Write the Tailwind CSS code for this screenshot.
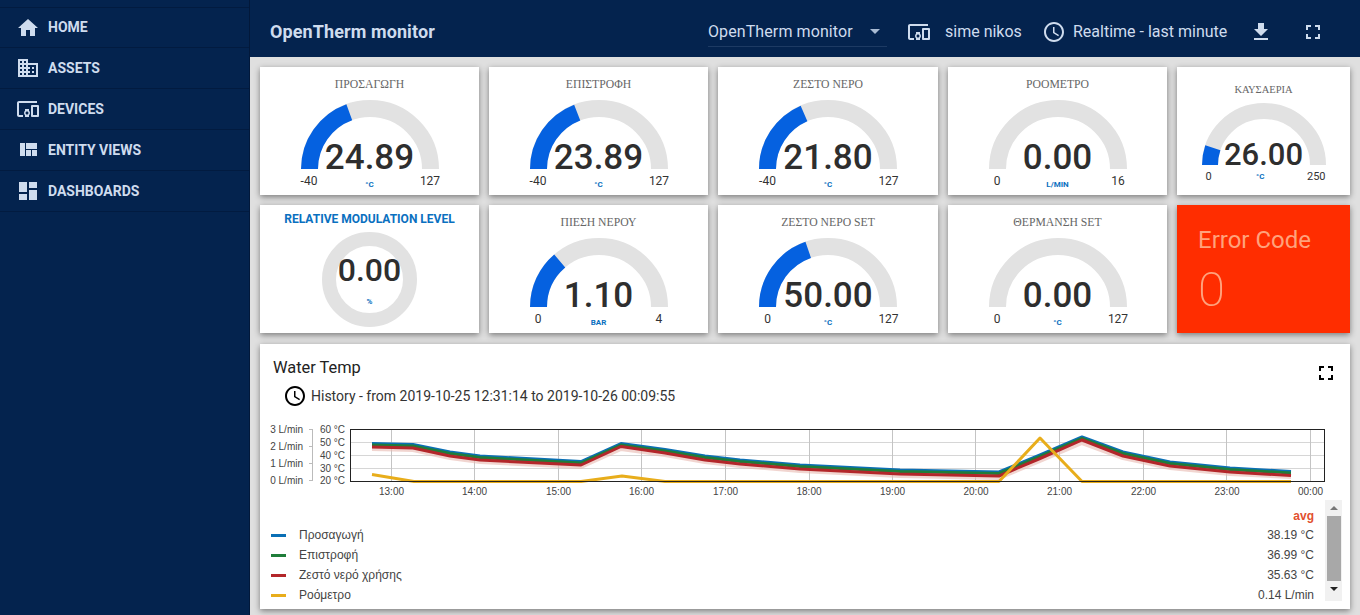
<!DOCTYPE html>
<html lang="el">
<head>
<meta charset="UTF-8" />
<meta name="viewport" content="width=device-width, initial-scale=1.0"/>
<title>OpenTherm monitor</title>
<script src="https://cdn.jsdelivr.net/npm/@tailwindcss/browser@4"></script>
</head>
<body class="h-[615px] w-[1360px] overflow-hidden bg-[#dfdfdf] font-['Roboto',sans-serif] flex">

<!-- SIDEBAR -->
<aside class="w-[250px] h-full bg-[#04234e] border-r border-[#02183a] pt-[7px] shrink-0 text-[#cfdcee] text-[14px] font-bold">
  <div class="h-[41px] border-y border-[#021b40] flex items-center pl-4 gap-2">
    <svg class="w-6 h-6 fill-current" viewBox="0 0 24 24"><path d="M10 20v-6h4v6h5v-8h3L12 3 2 12h3v8z"/></svg>HOME
  </div>
  <div class="h-[41px] border-b border-[#021b40] flex items-center pl-4 gap-2">
    <svg class="w-6 h-6 fill-current" viewBox="0 0 24 24"><path d="M12 7V3H2v18h20V7H12zM6 19H4v-2h2v2zm0-4H4v-2h2v2zm0-4H4V9h2v2zm0-4H4V5h2v2zm4 12H8v-2h2v2zm0-4H8v-2h2v2zm0-4H8V9h2v2zm0-4H8V5h2v2zm10 12h-8v-2h2v-2h-2v-2h2v-2h-2V9h8v10zm-2-8h-2v2h2v-2zm0 4h-2v2h2v-2z"/></svg>ASSETS
  </div>
  <div class="h-[41px] border-b border-[#021b40] flex items-center pl-4 gap-2">
    <svg class="w-6 h-6 fill-current" viewBox="0 0 24 24"><path d="M3 6h18V4H3c-1.1 0-2 .9-2 2v12c0 1.1.9 2 2 2h4v-2H3V6zm10 6H9v1.78c-.61.55-1 1.33-1 2.22s.39 1.67 1 2.22V20h4v-1.78c.61-.55 1-1.34 1-2.22s-.39-1.67-1-2.22V12zm-2 5.5c-.83 0-1.5-.67-1.5-1.5s.67-1.5 1.5-1.5 1.5.67 1.5 1.5-.67 1.5-1.5 1.5zM22 8h-6c-.5 0-1 .5-1 1v10c0 .5.5 1 1 1h6c.5 0 1-.5 1-1V9c0-.5-.5-1-1-1zm-1 10h-4v-8h4v8z"/></svg>DEVICES
  </div>
  <div class="h-[41px] border-b border-[#021b40] flex items-center pl-4 gap-2">
    <svg class="w-6 h-6 fill-current" viewBox="0 0 24 24"><path d="M10 18h5v-6h-5v6zm-6 0h5V5H4v13zm12 0h5v-6h-5v6zM10 5v6h11V5H10z"/></svg>ENTITY VIEWS
  </div>
  <div class="h-[41px] border-b border-[#021b40] flex items-center pl-4 gap-2">
    <svg class="w-6 h-6 fill-current" viewBox="0 0 24 24"><path d="M3 13h8V3H3v10zm0 8h8v-6H3v6zm10 0h8V11h-8v10zm0-18v6h8V3h-8z"/></svg>DASHBOARDS
  </div>
</aside>

<div class="flex-1 flex flex-col min-w-0">
  <!-- TOOLBAR -->
  <header class="h-[57px] pt-[6px] bg-[#04234e] flex items-center text-[#cfdcee] text-[16px] shrink-0">
    <span class="ml-[20px] w-[438px] text-[18px] font-bold tracking-[0.1px]">OpenTherm monitor</span>
    <div class="w-[179px] h-[30px] mt-[1px] border-b border-[#1d3a63] flex items-center justify-between pr-[7px] whitespace-nowrap tracking-[0.1px]">
      OpenTherm monitor
      <span class="w-0 h-0 border-x-[5px] border-x-transparent border-t-[5px] border-t-[#a9bbd3]"></span>
    </div>
    <svg class="ml-[20px] w-6 h-6 fill-current" viewBox="0 0 24 24"><path d="M3 6h18V4H3c-1.1 0-2 .9-2 2v12c0 1.1.9 2 2 2h4v-2H3V6zm10 6H9v1.78c-.61.55-1 1.33-1 2.22s.39 1.67 1 2.22V20h4v-1.78c.61-.55 1-1.34 1-2.22s-.39-1.67-1-2.22V12zm-2 5.5c-.83 0-1.5-.67-1.5-1.5s.67-1.5 1.5-1.5 1.5.67 1.5 1.5-.67 1.5-1.5 1.5zM22 8h-6c-.5 0-1 .5-1 1v10c0 .5.5 1 1 1h6c.5 0 1-.5 1-1V9c0-.5-.5-1-1-1zm-1 10h-4v-8h4v8z"/></svg>
    <span class="ml-[14px] w-[97px] whitespace-nowrap">sime nikos</span>
    <svg class="w-6 h-6 fill-current" viewBox="0 0 24 24"><path d="M11.99 2C6.47 2 2 6.48 2 12s4.47 10 9.99 10C17.52 22 22 17.52 22 12S17.52 2 11.99 2zM12 20c-4.42 0-8-3.58-8-8s3.58-8 8-8 8 3.58 8 8-3.58 8-8 8zm.5-13H11v6l5.25 3.15.75-1.23-4.5-2.67z"/></svg>
    <span class="ml-[7px] w-[176px] whitespace-nowrap">Realtime - last minute</span>
    <svg class="w-6 h-6 fill-current" viewBox="0 0 24 24"><path d="M19 9h-4V3H9v6H5l7 7 7-7zM5 18v2h14v-2H5z"/></svg>
    <svg class="ml-[28px] w-6 h-6 fill-current" viewBox="0 0 24 24"><path d="M7 14H5v5h5v-2H7v-3zm-2-4h2V7h3V5H5v5zm12 7h-3v2h5v-5h-2v3zM14 5v2h3v3h2V5h-5z"/></svg>
  </header>

  <main class="flex-1 pl-[10px] pt-[10px]">
    <!-- GAUGES -->
    <div id="widgets" class="grid grid-cols-[219px_219px_220px_219px_173px] grid-rows-[128px_128px] gap-x-[10px] gap-y-[10px]"></div>

    <!-- CHART CARD -->
    <section class="mt-[11px] w-[1090px] h-[265px] bg-white shadow-[0_2px_6px_rgba(0,0,0,0.45)] flex flex-col">
      <div class="h-[38px] pl-[13px] pr-[12px] flex items-end justify-between text-[16.4px] text-[#222]">
        <span class="leading-[24px] mb-[2px]">Water Temp</span>
        <svg class="w-6 h-6 mb-[-3px] fill-black" viewBox="0 0 24 24"><path d="M7 14H5v5h5v-2H7v-3zm-2-4h2V7h3V5H5v5zm12 7h-3v2h5v-5h-2v3zM14 5v2h3v3h2V5h-5z"/></svg>
      </div>
      <div class="h-[28px] pl-[23px] flex items-center gap-[4px] text-[14px] text-[#333]">
        <svg class="w-6 h-6 fill-black" viewBox="0 0 24 24"><path d="M11.99 2C6.47 2 2 6.48 2 12s4.47 10 9.99 10C17.52 22 22 17.52 22 12S17.52 2 11.99 2zM12 20c-4.42 0-8-3.58-8-8s3.58-8 8-8 8 3.58 8 8-3.58 8-8 8zm.5-13H11v6l5.25 3.15.75-1.23-4.5-2.67z"/></svg>
        History - from 2019-10-25 12:31:14 to 2019-10-26 00:09:55
      </div>
      <svg class="mt-[10px] w-[1090px] h-[80px] shrink-0 font-['Liberation_Sans',sans-serif] text-[10px] fill-[#444]" viewBox="260 420 1090 80">
        <g stroke="#d6d6d6" stroke-width="1">
          <path d="M351 442.5H1324M351 455.5H1324M351 468.5H1324"/>
          <path d="M391.5 430V481M474.5 430V481M558.5 430V481M641.5 430V481M725.5 430V481M809.5 430V481M892.5 430V481M975.5 430V481M1059.5 430V481M1143.5 430V481M1226.5 430V481M1310.5 430V481" stroke="#c4c4c4"/>
        </g>
        <!-- series -->
        <g fill="none" stroke-width="3" stroke-linejoin="round">
          <polyline stroke="#e8b9b0" stroke-width="4" opacity="0.6" points="372,449 413,450 450,458 480,462 581,467 621,449 665,455 705,462 740,466 800,471 900,476 999,478 1040,461 1082,443 1123,458 1170,468 1230,474 1291,477"/>
          <polyline stroke="#0a6fb5" points="372,443.5 413,444.5 450,452 480,456 581,461.5 621,443.5 665,449.5 705,456 740,460 800,465 900,470 999,472 1040,455 1082,437 1123,452 1170,462 1230,468 1291,471.5"/>
          <polyline stroke="#1f7d3a" points="372,445 413,446 450,453.5 480,457.5 581,463 621,445 665,451 705,457.5 740,461.5 800,466.5 900,471.5 999,473.5 1040,456.5 1082,438.5 1123,453.5 1170,463.5 1230,469.5 1291,473"/>
          <polyline stroke="#b3262a" points="372,447 413,448 450,456 480,460 581,465 621,446.5 665,453 705,460 740,464 800,469 900,474 999,476 1040,458.5 1082,440 1123,456 1170,466 1230,472 1291,475.5"/>
          <polyline stroke="#e8ad1b" points="372,474.5 414,481.5 581,481.5 622,476 665,481.5 999,481.5 1040,438 1082,481.5 1291,481.5"/>
        </g>
        <rect x="350.5" y="429.5" width="974" height="52" fill="none" stroke="#222" stroke-width="1"/>
        <path d="M312.5 430V481M309 429.5H313M309 446.5H313M309 463.5H313M309 480.5H313" stroke="#bbb" fill="none"/>
        <g text-anchor="end">
          <text x="303" y="433">3 L/min</text><text x="303" y="450">2 L/min</text><text x="303" y="467">1 L/min</text><text x="303" y="484">0 L/min</text>
          <text x="345" y="433">60 °C</text><text x="345" y="446">50 °C</text><text x="345" y="459">40 °C</text><text x="345" y="472">30 °C</text><text x="345" y="484">20 °C</text>
        </g>
        <g text-anchor="middle">
          <text x="391.5" y="495">13:00</text><text x="474.5" y="495">14:00</text><text x="558.5" y="495">15:00</text><text x="641.5" y="495">16:00</text><text x="725.5" y="495">17:00</text><text x="809" y="495">18:00</text><text x="892.5" y="495">19:00</text><text x="976" y="495">20:00</text><text x="1059.5" y="495">21:00</text><text x="1143.5" y="495">22:00</text><text x="1227" y="495">23:00</text><text x="1310.5" y="495">00:00</text>
        </g>
      </svg>
      <!-- LEGEND -->
      <div class="relative pl-[11px] pr-[36px] pt-[6px] font-['Liberation_Sans',sans-serif] text-[12px] text-[#444]">
        <div class="h-[19px] text-right font-bold text-[#e2502f] leading-[20px]">avg</div>
        <div class="h-[20px] flex items-center"><span class="w-[15px] h-[3px] bg-[#0a6fb5] mr-[13px]"></span>Προσαγωγή<span class="ml-auto">38.19 °C</span></div>
        <div class="h-[20px] flex items-center"><span class="w-[15px] h-[3px] bg-[#1f7d3a] mr-[13px]"></span>Επιστροφή<span class="ml-auto">36.99 °C</span></div>
        <div class="h-[20px] flex items-center"><span class="w-[15px] h-[3px] bg-[#b3262a] mr-[13px]"></span>Ζεστό νερό χρήσης<span class="ml-auto">35.63 °C</span></div>
        <div class="h-[20px] flex items-center"><span class="w-[15px] h-[3px] bg-[#e8ad1b] mr-[13px]"></span>Ροόμετρο<span class="ml-auto">0.14 L/min</span></div>
        <!-- scrollbar -->
        <div class="absolute right-[8px] top-0 w-[17px] h-[101px] bg-[#f1f1f1] flex flex-col items-center">
          <span class="mt-[6px] w-0 h-0 border-x-[4px] border-x-transparent border-b-[4px] border-b-[#777]"></span>
          <span class="mt-[6px] w-[14px] h-[65px] bg-[#a8a8a8]"></span>
          <span class="mt-[6px] w-0 h-0 border-x-[4px] border-x-transparent border-t-[4px] border-t-[#222]"></span>
        </div>
      </div>
    </section>
  </main>
</div>

<script>
  const cardClass = "bg-white shadow-[0_2px_6px_rgba(0,0,0,0.45)]";

  function gauge(g) {
    const pct = (g.value - g.min) / (g.max - g.min) * 100;
    return `
    <div class="${cardClass} flex flex-col items-center">
      <div class="h-[36px] pb-[1px] flex items-center font-['Liberation_Serif',serif] text-[11.7px] text-[#666] whitespace-nowrap">${g.title}</div>
      <div class="relative w-[138px] h-[66px]">
        <svg class="w-[138px] h-[66px] overflow-visible" viewBox="0 0 138 66" fill="none" stroke-width="17">
          <path d="M8.5 66A60.5 60.5 0 0 1 129.5 66" stroke="#e2e2e2"/>
          <path d="M8.5 66A60.5 60.5 0 0 1 129.5 66" stroke="#0561e0" pathLength="100" stroke-dasharray="${pct} 100"/>
        </svg>
        <div class="absolute inset-x-0 -bottom-[6px] text-center text-[35px] leading-none font-medium text-[#2e2e2e]">${g.text}</div>
      </div>
      <div class="w-[138px] h-[22px] flex items-center justify-between text-[12px] text-[#333]">
        <span class="mt-[2px] w-[17px] flex justify-center whitespace-nowrap">${g.min}</span>
        <span class="mt-[10px] text-[8px] font-bold text-[#0a70c0] whitespace-nowrap">${g.unit}</span>
        <span class="mt-[2px] w-[17px] flex justify-center whitespace-nowrap">${g.max}</span>
      </div>
    </div>`;
  }

  function smallGauge(g) {
    const pct = (g.value - g.min) / (g.max - g.min) * 100;
    return `
    <div class="${cardClass} flex flex-col items-center">
      <div class="h-[38px] pt-[8px] flex items-center font-['Liberation_Serif',serif] text-[10.5px] text-[#666] whitespace-nowrap">${g.title}</div>
      <div class="relative w-[124px] h-[60px]">
        <svg class="w-[124px] h-[60px] overflow-visible" viewBox="0 0 124 60" fill="none" stroke-width="16">
          <path d="M8 60A54 54 0 0 1 116 60" stroke="#e2e2e2"/>
          <path d="M8 60A54 54 0 0 1 116 60" stroke="#0561e0" pathLength="100" stroke-dasharray="${pct} 100"/>
        </svg>
        <div class="absolute inset-x-0 -bottom-[5px] text-center text-[31px] leading-none font-medium text-[#2e2e2e]">${g.text}</div>
      </div>
      <div class="w-[124px] h-[20px] flex items-center justify-between text-[11px] text-[#333]">
        <span class="ml-[2px] mt-[4px] w-[10px] flex justify-center whitespace-nowrap">${g.min}</span>
        <span class="mt-[3px] text-[8px] font-bold text-[#0a70c0]">${g.unit}</span>
        <span class="mt-[4px] whitespace-nowrap">${g.max}</span>
      </div>
    </div>`;
  }

  const donut = `
    <div class="${cardClass} flex flex-col items-center">
      <div class="h-[27px] flex items-center text-[12px] font-bold text-[#0a70c0] whitespace-nowrap">RELATIVE MODULATION LEVEL</div>
      <div class="relative w-[95px] h-[95px] rounded-full border-[14px] border-[#e2e2e2] flex flex-col items-center">
        <div class="mt-[2px] text-[32px] leading-[44px] font-medium text-[#2e2e2e]">0.00</div>
        <div class="text-[8px] font-bold text-[#0a70c0] mt-[4px]">%</div>
      </div>
    </div>`;

  const errorCard = `
    <div class="${cardClass} !bg-[#ff2d00] pl-[21px] pt-[19px] text-[#ffa27c]">
      <div class="text-[24px] leading-[32px]">Error Code</div>
      <div class="mt-[6px] text-[49px] leading-[56px] font-extralight">0</div>
    </div>`;

  document.getElementById("widgets").innerHTML = [
    gauge({ title: "ΠΡΟΣΑΓΩΓΗ", value: 24.89, text: "24.89", min: -40, max: 127, unit: "°C" }),
    gauge({ title: "ΕΠΙΣΤΡΟΦΗ", value: 23.89, text: "23.89", min: -40, max: 127, unit: "°C" }),
    gauge({ title: "ΖΕΣΤΟ ΝΕΡΟ", value: 21.80, text: "21.80", min: -40, max: 127, unit: "°C" }),
    gauge({ title: "ΡΟΟΜΕΤΡΟ", value: 0, text: "0.00", min: 0, max: 16, unit: "L/MIN" }),
    smallGauge({ title: "ΚΑΥΣΑΕΡΙΑ", value: 26, text: "26.00", min: 0, max: 250, unit: "°C" }),
    donut,
    gauge({ title: "ΠΙΕΣΗ ΝΕΡΟΥ", value: 1.10, text: "1.10", min: 0, max: 4, unit: "BAR" }),
    gauge({ title: "ΖΕΣΤΟ ΝΕΡΟ SET", value: 50, text: "50.00", min: 0, max: 127, unit: "°C" }),
    gauge({ title: "ΘΕΡΜΑΝΣΗ SET", value: 0, text: "0.00", min: 0, max: 127, unit: "°C" }),
    errorCard
  ].join("");
</script>
</body>
</html>
